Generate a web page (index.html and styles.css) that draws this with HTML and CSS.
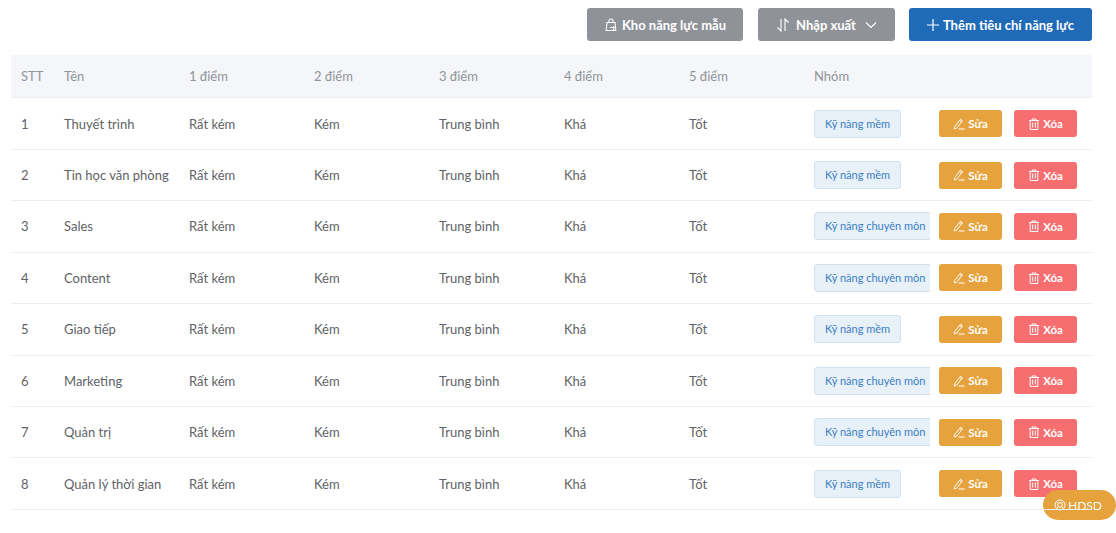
FILE: index.html
```html
<!DOCTYPE html>
<html lang="vi">
<head>
<meta charset="utf-8">
<title>Tiêu chí năng lực</title>
<link rel="stylesheet" href="styles.css">
</head>
<body>
<svg class="defs" width="0" height="0" aria-hidden="true">
  <symbol id="i-bag" viewBox="0 0 14 14"><path d="M3 4.500h8l.8 8H2.200z M5 4.500V3a2 2 0 0 1 4 0v1.500" fill="none" stroke="currentColor" stroke-width="1.100"/><path d="M6 9.500h5M9.500 8v4" fill="none" stroke="currentColor" stroke-width="1"/></symbol>
  <symbol id="i-sort" viewBox="0 0 14 14"><path d="M5 1v12L1.500 9.500M9 13V1l3.500 3.500" fill="none" stroke="currentColor" stroke-width="1.100"/></symbol>
  <symbol id="i-down" viewBox="0 0 12 12"><path d="M1 3.500l5 5 5-5" fill="none" stroke="currentColor" stroke-width="1.100"/></symbol>
  <symbol id="i-plus" viewBox="0 0 12 12"><path d="M6 0v12M0 6h12" fill="none" stroke="currentColor" stroke-width="1.200"/></symbol>
  <symbol id="i-edit" viewBox="0 0 12 12"><path d="M1.500 8.800L7.500 1.200l2 1.600-6 7.500-2.200.6zM7 2.500l2 1.600M5.500 11h6" fill="none" stroke="currentColor" stroke-width="1"/></symbol>
  <symbol id="i-trash" viewBox="0 0 12 12"><path d="M1 2.500h10M4 2.500V1h4v1.500M2.200 2.500v9h7.600v-9M4.700 4.500v5M7.300 4.500v5" fill="none" stroke="currentColor" stroke-width="1"/></symbol>
  <symbol id="i-help" viewBox="0 0 12 12"><circle cx="6" cy="6" r="5" fill="none" stroke="currentColor" stroke-width="1"/><circle cx="6" cy="6" r="2.300" fill="none" stroke="currentColor" stroke-width="1"/><path d="M2.500 2.500l2 2M9.500 2.500l-2 2M2.500 9.500l2-2M9.500 9.500l-2-2" stroke="currentColor" stroke-width="1"/></symbol>
</svg>
<main class="page">
  <div class="toolbar">
    <button class="btn btn-gray btn-kho"><svg class="ico14"><use href="#i-bag"/></svg>Kho năng lực mẫu</button>
    <button class="btn btn-gray btn-nx"><svg class="ico14"><use href="#i-sort"/></svg>Nhập xuất<svg class="ico12 chev"><use href="#i-down"/></svg></button>
    <button class="btn btn-blue btn-add"><svg class="ico12"><use href="#i-plus"/></svg>Thêm tiêu chí năng lực</button>
  </div>
  <table class="grid">
    <colgroup><col class="c-stt"><col class="c-d"><col class="c-d"><col class="c-d"><col class="c-d"><col class="c-d"><col class="c-d"><col class="c-nhom"><col class="c-act"></colgroup>
    <thead><tr><th>STT</th><th>Tên</th><th>1 điểm</th><th>2 điểm</th><th>3 điểm</th><th>4 điểm</th><th>5 điểm</th><th>Nhóm</th><th></th></tr></thead>
    <tbody>
      <tr><td>1</td><td>Thuyết trình</td><td>Rất kém</td><td>Kém</td><td>Trung bình</td><td>Khá</td><td>Tốt</td><td class="tagcell"><span class="tag">Kỹ năng mềm</span></td><td class="acts"><button class="act act-edit"><svg class="ico12"><use href="#i-edit"/></svg>Sửa</button><button class="act act-del"><svg class="ico12"><use href="#i-trash"/></svg>Xóa</button></td></tr>
      <tr><td>2</td><td>Tin học văn phòng</td><td>Rất kém</td><td>Kém</td><td>Trung bình</td><td>Khá</td><td>Tốt</td><td class="tagcell"><span class="tag">Kỹ năng mềm</span></td><td class="acts"><button class="act act-edit"><svg class="ico12"><use href="#i-edit"/></svg>Sửa</button><button class="act act-del"><svg class="ico12"><use href="#i-trash"/></svg>Xóa</button></td></tr>
      <tr><td>3</td><td>Sales</td><td>Rất kém</td><td>Kém</td><td>Trung bình</td><td>Khá</td><td>Tốt</td><td class="tagcell"><span class="tag">Kỹ năng chuyên môn</span></td><td class="acts"><button class="act act-edit"><svg class="ico12"><use href="#i-edit"/></svg>Sửa</button><button class="act act-del"><svg class="ico12"><use href="#i-trash"/></svg>Xóa</button></td></tr>
      <tr><td>4</td><td>Content</td><td>Rất kém</td><td>Kém</td><td>Trung bình</td><td>Khá</td><td>Tốt</td><td class="tagcell"><span class="tag">Kỹ năng chuyên môn</span></td><td class="acts"><button class="act act-edit"><svg class="ico12"><use href="#i-edit"/></svg>Sửa</button><button class="act act-del"><svg class="ico12"><use href="#i-trash"/></svg>Xóa</button></td></tr>
      <tr><td>5</td><td>Giao tiếp</td><td>Rất kém</td><td>Kém</td><td>Trung bình</td><td>Khá</td><td>Tốt</td><td class="tagcell"><span class="tag">Kỹ năng mềm</span></td><td class="acts"><button class="act act-edit"><svg class="ico12"><use href="#i-edit"/></svg>Sửa</button><button class="act act-del"><svg class="ico12"><use href="#i-trash"/></svg>Xóa</button></td></tr>
      <tr><td>6</td><td>Marketing</td><td>Rất kém</td><td>Kém</td><td>Trung bình</td><td>Khá</td><td>Tốt</td><td class="tagcell"><span class="tag">Kỹ năng chuyên môn</span></td><td class="acts"><button class="act act-edit"><svg class="ico12"><use href="#i-edit"/></svg>Sửa</button><button class="act act-del"><svg class="ico12"><use href="#i-trash"/></svg>Xóa</button></td></tr>
      <tr><td>7</td><td>Quản trị</td><td>Rất kém</td><td>Kém</td><td>Trung bình</td><td>Khá</td><td>Tốt</td><td class="tagcell"><span class="tag">Kỹ năng chuyên môn</span></td><td class="acts"><button class="act act-edit"><svg class="ico12"><use href="#i-edit"/></svg>Sửa</button><button class="act act-del"><svg class="ico12"><use href="#i-trash"/></svg>Xóa</button></td></tr>
      <tr><td>8</td><td>Quản lý thời gian</td><td>Rất kém</td><td>Kém</td><td>Trung bình</td><td>Khá</td><td>Tốt</td><td class="tagcell"><span class="tag">Kỹ năng mềm</span></td><td class="acts"><button class="act act-edit"><svg class="ico12"><use href="#i-edit"/></svg>Sửa</button><button class="act act-del"><svg class="ico12"><use href="#i-trash"/></svg>Xóa</button></td></tr>
    </tbody>
  </table>
</main>
<a class="hdsd"><svg class="ico12"><use href="#i-help"/></svg>HDSD</a>
</body>
</html>
```
FILE: styles.css
```css
* { box-sizing: border-box; }
html, body { margin: 0; height: 100%; overflow: hidden; background: #fff; }
body { font-family: "Lato", "Noto Sans", sans-serif; font-size: 13px; color: #606266; }
.defs { position: absolute; }
.page { padding: 8px 24px 0 11px; }
.toolbar { display: flex; justify-content: flex-end; height: 33px; margin-bottom: 14px; }
button { font: inherit; border: 0; cursor: pointer; }
.btn { height: 33px; border-radius: 3px; color: #fff; display: flex; align-items: center; justify-content: center; font-weight: 700; font-size: 13px; padding: 0; }
.btn-gray { background: #909299; }
.btn-blue { background: #1f6bb8; }
.btn-kho { width: 156px; gap: 4px; margin-right: 15px; }
.btn-nx { width: 137px; gap: 6px; margin-right: 14px; }
.btn-add { width: 183px; gap: 4px; }
.chev { margin-left: 3px; }
.ico14 { width: 14px; height: 14px; flex: none; }
.ico12 { width: 12px; height: 12px; flex: none; }
.grid { width: 1081px; table-layout: fixed; border-collapse: separate; border-spacing: 0; }
.c-stt { width: 43px; } .c-d { width: 125px; } .c-nhom { width: 126px; } .c-act { width: 162px; }
th { height: 43.400px; background: #f5f6fa; color: #909399; font-weight: 400; text-align: left; padding: 0 10px; border-bottom: 1px solid #ebeef5; white-space: nowrap; }
td { height: 51.430px; padding: 0 10px; border-bottom: 1px solid #ebeef5; white-space: nowrap; overflow: hidden; }
.tagcell { padding-right: 0; }
.tag { display: inline-block; height: 28px; line-height: 26px; padding: 0 10px; font-size: 11px; color: #3a7fc4; background: #e8f0f8; border: 1px solid #d2e1f0; border-radius: 3px; vertical-align: middle; }
.acts { padding: 0 0 0 9px; }
.act { width: 63px; height: 27px; border-radius: 3px; color: #fff; font-size: 11.500px; font-weight: 700; display: inline-flex; align-items: center; justify-content: center; gap: 3px; padding: 0; vertical-align: middle; }
.act + .act { margin-left: 12px; }
.act-edit { background: #e6a23c; }
.act-del { background: #f76e70; }
.hdsd { position: fixed; left: 1043px; top: 490px; width: 73px; height: 30px; border-radius: 15px; background: #e6a23c; color: #fff; display: flex; align-items: center; justify-content: flex-end; gap: 2px; padding-right: 14px; font-size: 12px; }
.hdsd::after { content: ""; position: absolute; left: 0; top: 19px; width: 49px; height: 1px; background: #ebeef5; }
```
